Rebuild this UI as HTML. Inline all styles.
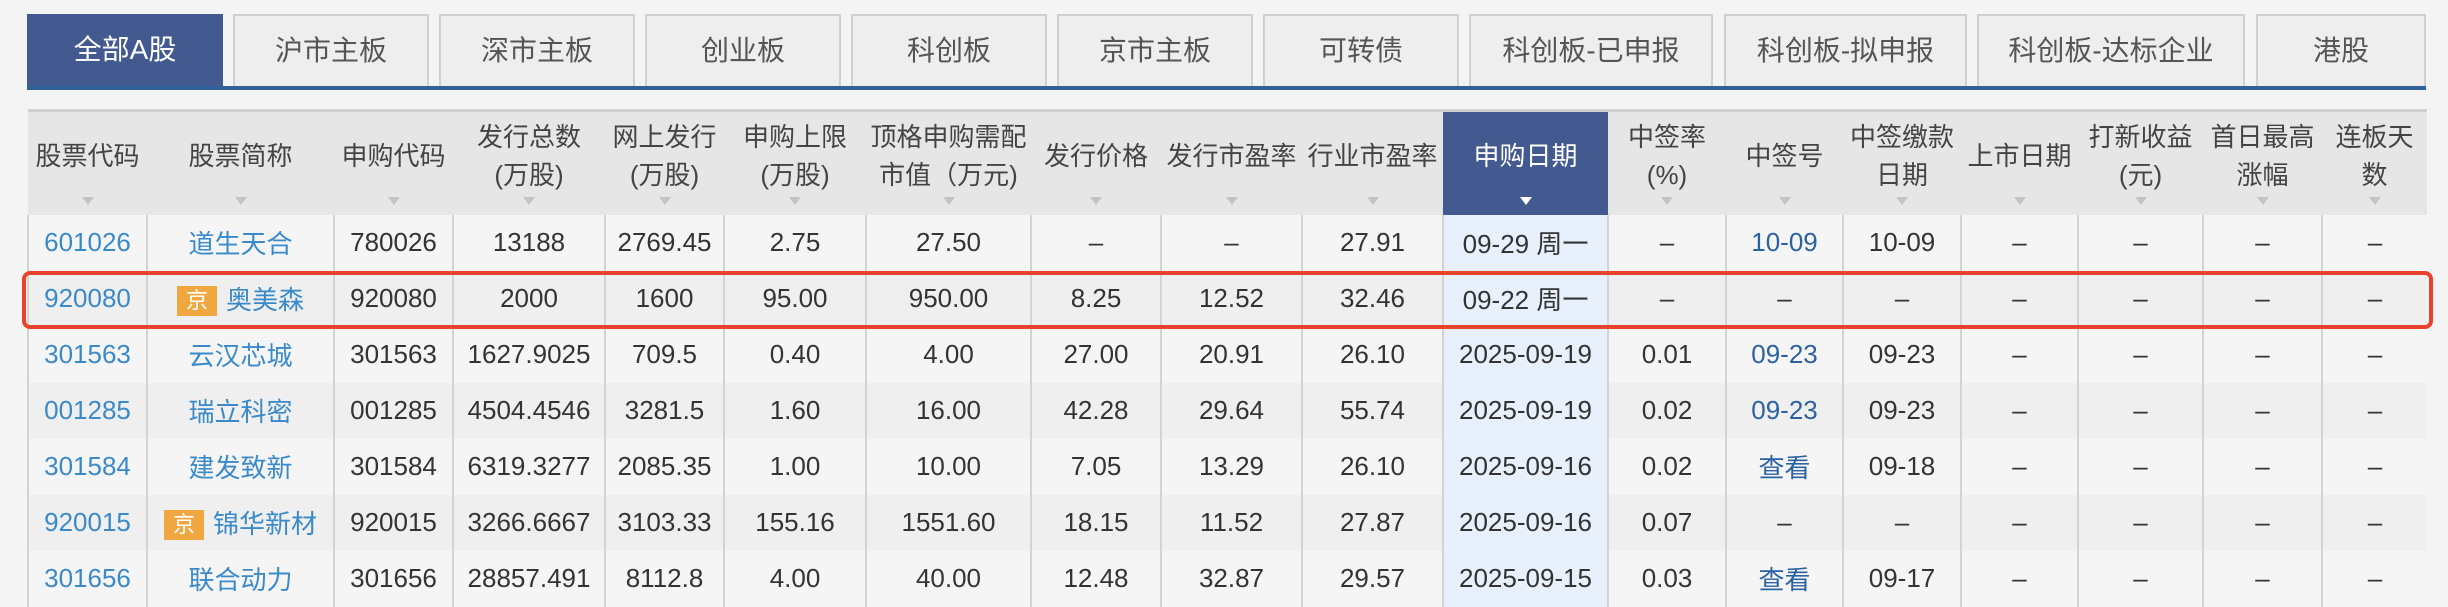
<!DOCTYPE html>
<html><head><meta charset="utf-8"><style>
*{margin:0;padding:0;box-sizing:border-box}
body{width:2448px;height:606px;background:#f4f4f4;font-family:"Liberation Sans","Noto Sans CJK SC",sans-serif;overflow:hidden;position:relative;color:#333}
.tab{position:absolute;top:14px;height:72px;background:#eeeeee;border:2px solid #d0d0d0;border-bottom:none;font-size:28px;color:#555;text-align:center;line-height:70px}
.tab.on{background:#435a91;color:#fff;border:none;line-height:72px}
.ul{position:absolute;left:27px;top:86px;width:2399px;height:4px;background:#2e6299}
table{position:absolute;left:27px;top:109px;border-collapse:collapse;table-layout:fixed;width:2399px;border-top:3px solid #d0d0d0}
th{height:104px;background:#e6e6e6;font-weight:normal;font-size:26px;color:#444;line-height:38px;position:relative;padding-bottom:14px;vertical-align:middle}
th:after{content:"";position:absolute;left:50%;bottom:10px;margin-left:-6px;border-left:6px solid transparent;border-right:6px solid transparent;border-top:8px solid #c4c4c4}
th.on{background:#435a91;color:#fff}
th.on:after{border-top-color:#fff}
td{height:56px;text-align:center;font-size:26px;border-left:2px solid #d3d3d3;white-space:nowrap}
tr:nth-child(odd) td{background:#f5f5f5}
tr:nth-child(even) td{background:#efefef}
tbody tr td.d{background:#e8f1fb}
.l{color:#3a8ac9}.b{color:#2a62a0}
.k{display:inline-block;width:40px;height:30px;background:#f0a740;color:#fff;font-size:22px;line-height:30px;margin-right:9px;vertical-align:1px}
.red{position:absolute;left:22px;top:271px;width:2411px;height:58px;border:4px solid #e8432a;border-radius:8px}
</style></head><body>
<div class="tab on" style="left:27px;width:196px">全部A股</div>
<div class="tab" style="left:233px;width:196px">沪市主板</div>
<div class="tab" style="left:439px;width:196px">深市主板</div>
<div class="tab" style="left:645px;width:196px">创业板</div>
<div class="tab" style="left:851px;width:196px">科创板</div>
<div class="tab" style="left:1057px;width:196px">京市主板</div>
<div class="tab" style="left:1263px;width:196px">可转债</div>
<div class="tab" style="left:1469px;width:244px">科创板-已申报</div>
<div class="tab" style="left:1724px;width:243px">科创板-拟申报</div>
<div class="tab" style="left:1977px;width:268px">科创板-达标企业</div>
<div class="tab" style="left:2256px;width:170px">港股</div>
<div class="ul"></div>
<table>
<colgroup><col style="width:119px"><col style="width:187px"><col style="width:119px"><col style="width:152px"><col style="width:119px"><col style="width:142px"><col style="width:165px"><col style="width:130px"><col style="width:141px"><col style="width:141px"><col style="width:165px"><col style="width:118px"><col style="width:117px"><col style="width:118px"><col style="width:117px"><col style="width:125px"><col style="width:119px"><col style="width:105px"></colgroup>
<thead><tr><th>股票代码</th><th>股票简称</th><th>申购代码</th><th>发行总数<br>(万股)</th><th>网上发行<br>(万股)</th><th>申购上限<br>(万股)</th><th>顶格申购需配<br>市值（万元)</th><th>发行价格</th><th>发行市盈率</th><th>行业市盈率</th><th class="on">申购日期</th><th>中签率<br>(%)</th><th>中签号</th><th>中签缴款<br>日期</th><th>上市日期</th><th>打新收益<br>(元)</th><th>首日最高<br>涨幅</th><th>连板天<br>数</th></tr></thead>
<tbody>
<tr><td class="l">601026</td><td class="l">道生天合</td><td>780026</td><td>13188</td><td>2769.45</td><td>2.75</td><td>27.50</td><td>–</td><td>–</td><td>27.91</td><td class="d">09-29 周一</td><td>–</td><td class="b">10-09</td><td>10-09</td><td>–</td><td>–</td><td>–</td><td>–</td></tr>
<tr><td class="l">920080</td><td class="l"><span class="k">京</span>奥美森</td><td>920080</td><td>2000</td><td>1600</td><td>95.00</td><td>950.00</td><td>8.25</td><td>12.52</td><td>32.46</td><td class="d">09-22 周一</td><td>–</td><td>–</td><td>–</td><td>–</td><td>–</td><td>–</td><td>–</td></tr>
<tr><td class="l">301563</td><td class="l">云汉芯城</td><td>301563</td><td>1627.9025</td><td>709.5</td><td>0.40</td><td>4.00</td><td>27.00</td><td>20.91</td><td>26.10</td><td class="d">2025-09-19</td><td>0.01</td><td class="b">09-23</td><td>09-23</td><td>–</td><td>–</td><td>–</td><td>–</td></tr>
<tr><td class="l">001285</td><td class="l">瑞立科密</td><td>001285</td><td>4504.4546</td><td>3281.5</td><td>1.60</td><td>16.00</td><td>42.28</td><td>29.64</td><td>55.74</td><td class="d">2025-09-19</td><td>0.02</td><td class="b">09-23</td><td>09-23</td><td>–</td><td>–</td><td>–</td><td>–</td></tr>
<tr><td class="l">301584</td><td class="l">建发致新</td><td>301584</td><td>6319.3277</td><td>2085.35</td><td>1.00</td><td>10.00</td><td>7.05</td><td>13.29</td><td>26.10</td><td class="d">2025-09-16</td><td>0.02</td><td class="b">查看</td><td>09-18</td><td>–</td><td>–</td><td>–</td><td>–</td></tr>
<tr><td class="l">920015</td><td class="l"><span class="k">京</span>锦华新材</td><td>920015</td><td>3266.6667</td><td>3103.33</td><td>155.16</td><td>1551.60</td><td>18.15</td><td>11.52</td><td>27.87</td><td class="d">2025-09-16</td><td>0.07</td><td>–</td><td>–</td><td>–</td><td>–</td><td>–</td><td>–</td></tr>
<tr><td class="l">301656</td><td class="l">联合动力</td><td>301656</td><td>28857.491</td><td>8112.8</td><td>4.00</td><td>40.00</td><td>12.48</td><td>32.87</td><td>29.57</td><td class="d">2025-09-15</td><td>0.03</td><td class="b">查看</td><td>09-17</td><td>–</td><td>–</td><td>–</td><td>–</td></tr>
</tbody></table>
<div class="red"></div>
</body></html>
